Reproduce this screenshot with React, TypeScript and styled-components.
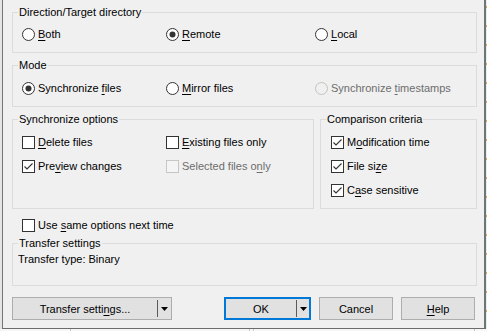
import React from "react";
import styled, { createGlobalStyle } from "styled-components";

const GlobalStyle = createGlobalStyle`
  html, body { margin: 0; padding: 0; }
  body { background: #ececec; font-family: "Liberation Sans", Arial, sans-serif; font-size: 11px; color: #000; }
`;

const Page = styled.div`
  width: 487px;
  height: 331px;
  overflow: hidden;
  display: flex;
  flex-direction: column;
  background: #f4f4f4;
`;

const TopRow = styled.div`
  display: flex;
  height: 329px;
  flex: none;
`;

const LeftEdge = styled.div`
  width: 2px;
  background: #e4e4e4;
`;

const RightEdge = styled.div`
  width: 1px;
  background: repeating-linear-gradient(to bottom, #ececec 0 6px, #e8a040 6px 8px, #ececec 8px 19px);
`;

const Window = styled.div`
  box-sizing: border-box;
  width: 484px;
  height: 329px;
  border-left: 1px solid #767676;
  border-right: 2px solid #6a7878;
  border-bottom: 1px solid #6b6b6b;
  background: #f0f0f0;
  padding: 5px 0 8px 9px;
  display: flex;
  flex-direction: column;
`;

const Content = styled.div`
  width: 465px;
  display: flex;
  flex-direction: column;
`;

const Group = styled.fieldset<{ $mt?: number }>`
  margin: ${(p) => p.$mt ?? 0}px 0 0 0;
  padding: 0;
  border: 1px solid #dcdcdc;
  min-width: 0;
  box-sizing: border-box;
`;

const Legend = styled.legend`
  padding: 0 1px;
  margin-left: 5px;
  line-height: 15px;
  font-size: 11px;
  color: #000;
`;

const Body = styled.div<{ $pad: string }>`
  padding: ${(p) => p.$pad};
`;

const OptionGrid = styled.div`
  display: grid;
  grid-template-columns: 144px 149px 1fr;
  row-gap: 8px;
`;

const OptionColumn = styled.div`
  display: flex;
  flex-direction: column;
  gap: 8px;
`;

const Option = styled.label<{ $disabled?: boolean }>`
  display: flex;
  align-items: center;
  gap: 3px;
  height: 16px;
  line-height: 16px;
  white-space: nowrap;
  color: ${(p) => (p.$disabled ? "#6d6d6d" : "#000")};
`;

const Key = styled.u`
  text-decoration: underline;
  text-underline-offset: 2px;
  text-decoration-thickness: 1px;
`;

const Mark = styled.svg`
  flex: none;
  display: block;
`;

const GroupRow = styled.div`
  display: flex;
  gap: 6px;
  margin-top: 5px;
`;

const SyncGroup = styled(Group)`
  width: 302px;
`;

const CompareGroup = styled(Group)`
  width: 157px;
`;

const StandaloneRow = styled.div`
  margin-top: 8px;
  padding-left: 10px;
`;

const InfoText = styled.div`
  line-height: 16px;
  height: 16px;
`;

const ButtonRow = styled.div`
  display: flex;
  width: 463px;
  margin-top: 11px;
`;

const RightButtons = styled.div`
  margin-left: auto;
  display: flex;
  gap: 8px;
`;

const Button = styled.button<{ $w: number; $default?: boolean }>`
  box-sizing: border-box;
  width: ${(p) => p.$w}px;
  height: 23px;
  margin: 0;
  padding: 0;
  background: #e1e1e1;
  border: ${(p) => (p.$default ? "2px solid #0078d7" : "1px solid #adadad")};
  font: inherit;
  font-size: 11px;
  color: #000;
  display: flex;
  align-items: center;
  justify-content: center;
`;

const SplitLabel = styled.span`
  flex: 1;
  text-align: center;
  line-height: 16px;
`;

const SplitSep = styled.span`
  width: 1px;
  height: 17px;
  background: #5a5a5a;
  flex: none;
`;

const SplitArrow = styled.span<{ $w: number }>`
  width: ${(p) => p.$w}px;
  flex: none;
  display: flex;
  align-items: center;
  justify-content: center;
`;

const BottomStrip = styled.div`
  height: 2px;
  display: flex;
  background: #f7f7f7;
`;

const ColumnLine = styled.span<{ $ml: number }>`
  margin-left: ${(p) => p.$ml}px;
  width: 1px;
  background: #c8c8c8;
`;

const Radio = ({ checked, disabled }: { checked?: boolean; disabled?: boolean }) => (
  <Mark width="13" height="13" viewBox="0 0 13 13">
    <circle cx="6.5" cy="6.5" r="6" fill={disabled ? "#f0f0f0" : "#fff"} stroke={disabled ? "#c2c2c2" : "#333"} strokeWidth="1" />
    {checked && <circle cx="6.5" cy="6.5" r="3" fill="#333" />}
  </Mark>
);

const Check = ({ checked, disabled }: { checked?: boolean; disabled?: boolean }) => (
  <Mark width="13" height="13" viewBox="0 0 13 13">
    <rect x="0.5" y="0.5" width="12" height="12" fill={disabled ? "#f4f4f4" : "#fff"} stroke={disabled ? "#c6c6c6" : "#333"} strokeWidth="1" />
    {checked && <polyline points="2.5,6.5 5,9 10.5,3.5" fill="none" stroke="#333" strokeWidth="1.1" />}
  </Mark>
);

const Arrow = () => (
  <svg width="7" height="4" viewBox="0 0 7 4">
    <polygon points="0,0 7,0 3.5,4" fill="#000" />
  </svg>
);

export default function App() {
  return (
    <>
      <GlobalStyle />
      <Page>
        <TopRow>
          <LeftEdge />
          <Window>
            <Content>
              <Group>
                <Legend>Direction/Target directory</Legend>
                <Body $pad="6px 0 10px 9px">
                  <OptionGrid>
                    <Option><Radio /><span><Key>B</Key>oth</span></Option>
                    <Option><Radio checked /><span><Key>R</Key>emote</span></Option>
                    <Option><Radio /><span><Key>L</Key>ocal</span></Option>
                  </OptionGrid>
                </Body>
              </Group>

              <Group $mt={5}>
                <Legend>Mode</Legend>
                <Body $pad="7px 0 10px 9px">
                  <OptionGrid>
                    <Option><Radio checked /><span>Synchronize <Key>f</Key>iles</span></Option>
                    <Option><Radio /><span><Key>M</Key>irror files</span></Option>
                    <Option $disabled><Radio disabled /><span>Synchronize <Key>t</Key>imestamps</span></Option>
                  </OptionGrid>
                </Body>
              </Group>

              <GroupRow>
                <SyncGroup>
                  <Legend>Synchronize options</Legend>
                  <Body $pad="7px 0 10px 9px">
                    <OptionGrid>
                      <Option><Check /><span><Key>D</Key>elete files</span></Option>
                      <Option><Check /><span><Key>E</Key>xisting files only</span></Option>
                      <span />
                      <Option><Check checked /><span>Pre<Key>v</Key>iew changes</span></Option>
                      <Option $disabled><Check disabled /><span>Selected files o<Key>n</Key>ly</span></Option>
                    </OptionGrid>
                  </Body>
                </SyncGroup>
                <CompareGroup>
                  <Legend>Comparison criteria</Legend>
                  <Body $pad="7px 0 10px 10px">
                    <OptionColumn>
                      <Option><Check checked /><span>M<Key>o</Key>dification time</span></Option>
                      <Option><Check checked /><span>File si<Key>z</Key>e</span></Option>
                      <Option><Check checked /><span>C<Key>a</Key>se sensitive</span></Option>
                    </OptionColumn>
                  </Body>
                </CompareGroup>
              </GroupRow>

              <StandaloneRow>
                <Option><Check /><span>Use <Key>s</Key>ame options next time</span></Option>
              </StandaloneRow>

              <Group $mt={3}>
                <Legend>Transfer settings</Legend>
                <Body $pad="0 0 18px 5px">
                  <InfoText>Transfer type: Binary</InfoText>
                </Body>
              </Group>

              <ButtonRow>
                <Button $w={160}>
                  <SplitLabel>Transfer setti<Key>n</Key>gs...</SplitLabel>
                  <SplitSep />
                  <SplitArrow $w={13}><Arrow /></SplitArrow>
                </Button>
                <RightButtons>
                  <Button $w={87} $default>
                    <SplitLabel>OK</SplitLabel>
                    <SplitSep />
                    <SplitArrow $w={12}><Arrow /></SplitArrow>
                  </Button>
                  <Button $w={74}>Cancel</Button>
                  <Button $w={74}><span><Key>H</Key>elp</span></Button>
                </RightButtons>
              </ButtonRow>
            </Content>
          </Window>
          <RightEdge />
        </TopRow>
        <BottomStrip>
          <ColumnLine $ml={70} />
          <ColumnLine $ml={178} />
          <ColumnLine $ml={3} />
          <ColumnLine $ml={220} />
        </BottomStrip>
      </Page>
    </>
  );
}
